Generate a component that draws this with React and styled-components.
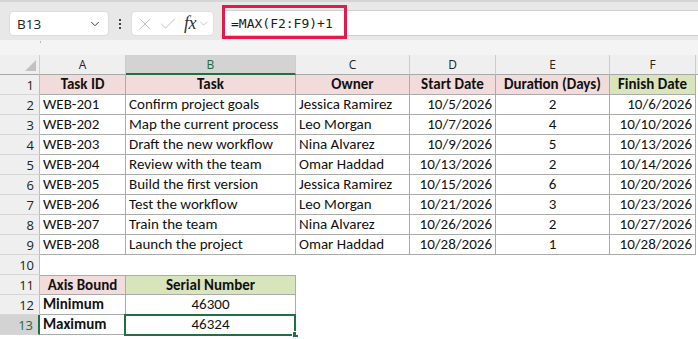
import React from 'react'
import styled, { createGlobalStyle } from 'styled-components';
import { X, Check, ChevronDown } from 'lucide-react';

const GlobalStyle = createGlobalStyle`
  html, body {
    margin: 0;
    padding: 0;
    background: #fff;
    overflow: hidden;
  }
`;

const Page = styled.div`
  width: 698px;
  height: 339px;
  overflow: hidden;
  font-family: "Open Sans", "Noto Sans", sans-serif;
`;

const TopBar = styled.div`
  position: relative;
  height: 40px;
  box-sizing: border-box;
  padding-top: 8px;
  background: #e8e8e8;
  border-top: 2px solid #d4d4d4;
  display: flex;
  align-items: flex-start;
`;

const NameBox = styled.div`
  margin: 1px 0 0 9px;
  width: 100px;
  height: 25px;
  box-sizing: border-box;
  background: #fff;
  border: 1px solid #dcdcdc;
  border-radius: 4px;
  display: flex;
  align-items: center;
  justify-content: space-between;
  padding: 0 6px 0 7px;
  font-size: 13.5px;
  color: #222;
`;

const Dots = styled.div`
  width: 22px;
  height: 25px;
  margin-top: 1px;
  display: flex;
  flex-direction: column;
  align-items: center;
  justify-content: center;
  gap: 2px;

  span {
    width: 2px;
    height: 2px;
    background: #444;
  }
`;

const IconBox = styled.div`
  margin: 1px 0 0 0;
  width: 83px;
  height: 25px;
  box-sizing: border-box;
  background: #fff;
  border: 1px solid #e0e0e0;
  border-radius: 4px;
  display: flex;
  align-items: center;
  padding-left: 3px;
  gap: 3px;
  color: #b4b4b4;
`;

const Fx = styled.span`
  font-family: "Liberation Serif", serif;
  font-style: italic;
  font-size: 18px;
  color: #333;
  margin-left: 3px;
  letter-spacing: -0.5px;
`;

const FormulaInput = styled.div`
  margin-left: 8px;
  flex: 1;
  height: 26px;
  box-sizing: border-box;
  background: #fff;
  border-top: 1px solid #cfcfcf;
  border-bottom: 1px solid #cfcfcf;
  display: flex;
  align-items: center;
  padding-left: 9px;
  font-family: "DejaVu Sans Mono", "Liberation Mono", monospace;
  font-size: 13px;
  color: #1b1b1b;
`;

const Highlight = styled.div`
  position: absolute;
  left: 222px;
  top: 3px;
  width: 125px;
  height: 34px;
  box-sizing: border-box;
  border: 3px solid #e3194b;
`;

const Gap = styled.div`
  height: 15px;
  background: #f4f4f4;
  position: relative;

  &::after {
    content: '';
    position: absolute;
    left: 40px;
    top: 1px;
    width: 1px;
    height: 2px;
    background: #bbb;
  }
`;

const Sheet = styled.div`
  display: grid;
  grid-template-columns: 40px 86px 170px 114px 86px 114px 86px 1fr;
  grid-auto-rows: 20px;
`;

const Corner = styled.div`
  position: relative;
  background: #efefef;
  border-right: 1px solid #cfcfcf;
  border-bottom: 1px solid #a8a8a8;

  &::after {
    content: '';
    position: absolute;
    right: 3px;
    bottom: 3px;
    border-left: 11px solid transparent;
    border-bottom: 11px solid #c2c2c2;
  }
`;

const ColHead = styled.div`
  box-sizing: border-box;
  background: ${p => (p.$active ? '#d3d3d3' : '#efefef')};
  border-right: 1px solid #cdcdcd;
  border-bottom: ${p => (p.$active ? '2px solid #1e7145' : '1px solid #a8a8a8')};
  color: ${p => (p.$active ? '#1e6b3e' : '#222')};
  font-size: 12px;
  display: flex;
  align-items: center;
  justify-content: center;
`;

const RowHead = styled.div`
  box-sizing: border-box;
  background: ${p => (p.$active ? '#d3d3d3' : '#efefef')};
  border-right: ${p => (p.$active ? '2px solid #1e7145' : '1px solid #bdbdbd')};
  border-bottom: 1px solid #d6d6d6;
  color: ${p => (p.$active ? '#1e6b3e' : '#222')};
  font-size: 13px;
  display: flex;
  align-items: center;
  justify-content: flex-end;
  padding-right: 5px;
`;

const Cell = styled.div`
  position: relative;
  box-sizing: border-box;
  background: ${p => p.$fill || '#fff'};
  border-right: ${p => (p.$lined ? '1px solid #ababab' : 'none')};
  border-bottom: ${p => (p.$lined ? '1px solid #ababab' : 'none')};
  border-top: ${p => (p.$top ? '1px solid #ababab' : 'none')};
  font-family: "Carlito", "Lato", sans-serif;
  font-size: 15px;
  font-weight: ${p => (p.$bold ? 700 : 400)};
  color: #111;
  white-space: nowrap;
  overflow: visible;
  display: flex;
  align-items: center;
  justify-content: ${p => p.$align || 'flex-start'};
  padding: 0 3px 1px;
`;

const Selection = styled.div`
  position: absolute;
  left: -2px;
  top: -1px;
  right: -1px;
  bottom: -2px;
  border: 2px solid #1e7145;
  pointer-events: none;

  &::after {
    content: '';
    position: absolute;
    right: -5px;
    bottom: -4px;
    width: 5px;
    height: 5px;
    background: #1e7145;
    border: 1px solid #fff;
  }
`;

const PINK = '#f2dcdb';
const GREEN = '#d8e4bc';

const columns = ['A', 'B', 'C', 'D', 'E', 'F'];

const tasks = [
  ['WEB-201', 'Confirm project goals', 'Jessica Ramirez', '10/5/2026', '2', '10/6/2026'],
  ['WEB-202', 'Map the current process', 'Leo Morgan', '10/7/2026', '4', '10/10/2026'],
  ['WEB-203', 'Draft the new workflow', 'Nina Alvarez', '10/9/2026', '5', '10/13/2026'],
  ['WEB-204', 'Review with the team', 'Omar Haddad', '10/13/2026', '2', '10/14/2026'],
  ['WEB-205', 'Build the first version', 'Jessica Ramirez', '10/15/2026', '6', '10/20/2026'],
  ['WEB-206', 'Test the workflow', 'Leo Morgan', '10/21/2026', '3', '10/23/2026'],
  ['WEB-207', 'Train the team', 'Nina Alvarez', '10/26/2026', '2', '10/27/2026'],
  ['WEB-208', 'Launch the project', 'Omar Haddad', '10/28/2026', '1', '10/28/2026'],
];

const headers = ['Task ID', 'Task', 'Owner', 'Start Date', 'Duration (Days)', 'Finish Date'];
const aligns = ['flex-start', 'flex-start', 'flex-start', 'flex-end', 'center', 'flex-end'];

const Blank = () => (
  <>
    <Cell /><Cell /><Cell /><Cell />
  </>
);

const App = () => {
  return (
    <Page>
      <GlobalStyle />
      <TopBar>
        <NameBox>
          <span>B13</span>
          <ChevronDown size={14} strokeWidth={1.6} color="#333" />
        </NameBox>
        <Dots><span /><span /><span /></Dots>
        <IconBox>
          <X size={20} strokeWidth={1} />
          <Check size={20} strokeWidth={1} />
          <Fx>fx</Fx>
          <ChevronDown size={13} strokeWidth={1.3} style={{ marginLeft: -2 }} />
        </IconBox>
        <FormulaInput>=MAX(F2:F9)+1</FormulaInput>
        <Highlight />
      </TopBar>
      <Gap />
      <Sheet>
        <Corner />
        {columns.map(c => (
          <ColHead key={c} $active={c === 'B'}>{c}</ColHead>
        ))}
        <ColHead />

        <RowHead>1</RowHead>
        {headers.map((h, i) => (
          <Cell key={h} $lined $bold $align="center" $fill={i === 5 ? GREEN : PINK}>{h}</Cell>
        ))}
        <Cell />

        {tasks.map((row, r) => (
          <React.Fragment key={row[0]}>
            <RowHead>{r + 2}</RowHead>
            {row.map((v, i) => (
              <Cell key={i} $lined $align={aligns[i]}>{v}</Cell>
            ))}
            <Cell />
          </React.Fragment>
        ))}

        <RowHead>10</RowHead>
        <Cell /><Cell /><Blank /><Cell />

        <RowHead>11</RowHead>
        <Cell $lined $top $bold $align="center" $fill={PINK}>Axis Bound</Cell>
        <Cell $lined $top $bold $align="center" $fill={GREEN}>Serial Number</Cell>
        <Blank /><Cell />

        <RowHead>12</RowHead>
        <Cell $lined $bold>Minimum</Cell>
        <Cell $lined $align="center">46300</Cell>
        <Blank /><Cell />

        <RowHead $active>13</RowHead>
        <Cell $lined $bold>Maximum</Cell>
        <Cell $lined $align="center">
          46324
          <Selection />
        </Cell>
        <Blank /><Cell />
      </Sheet>
    </Page>
  );
};

export default App;
